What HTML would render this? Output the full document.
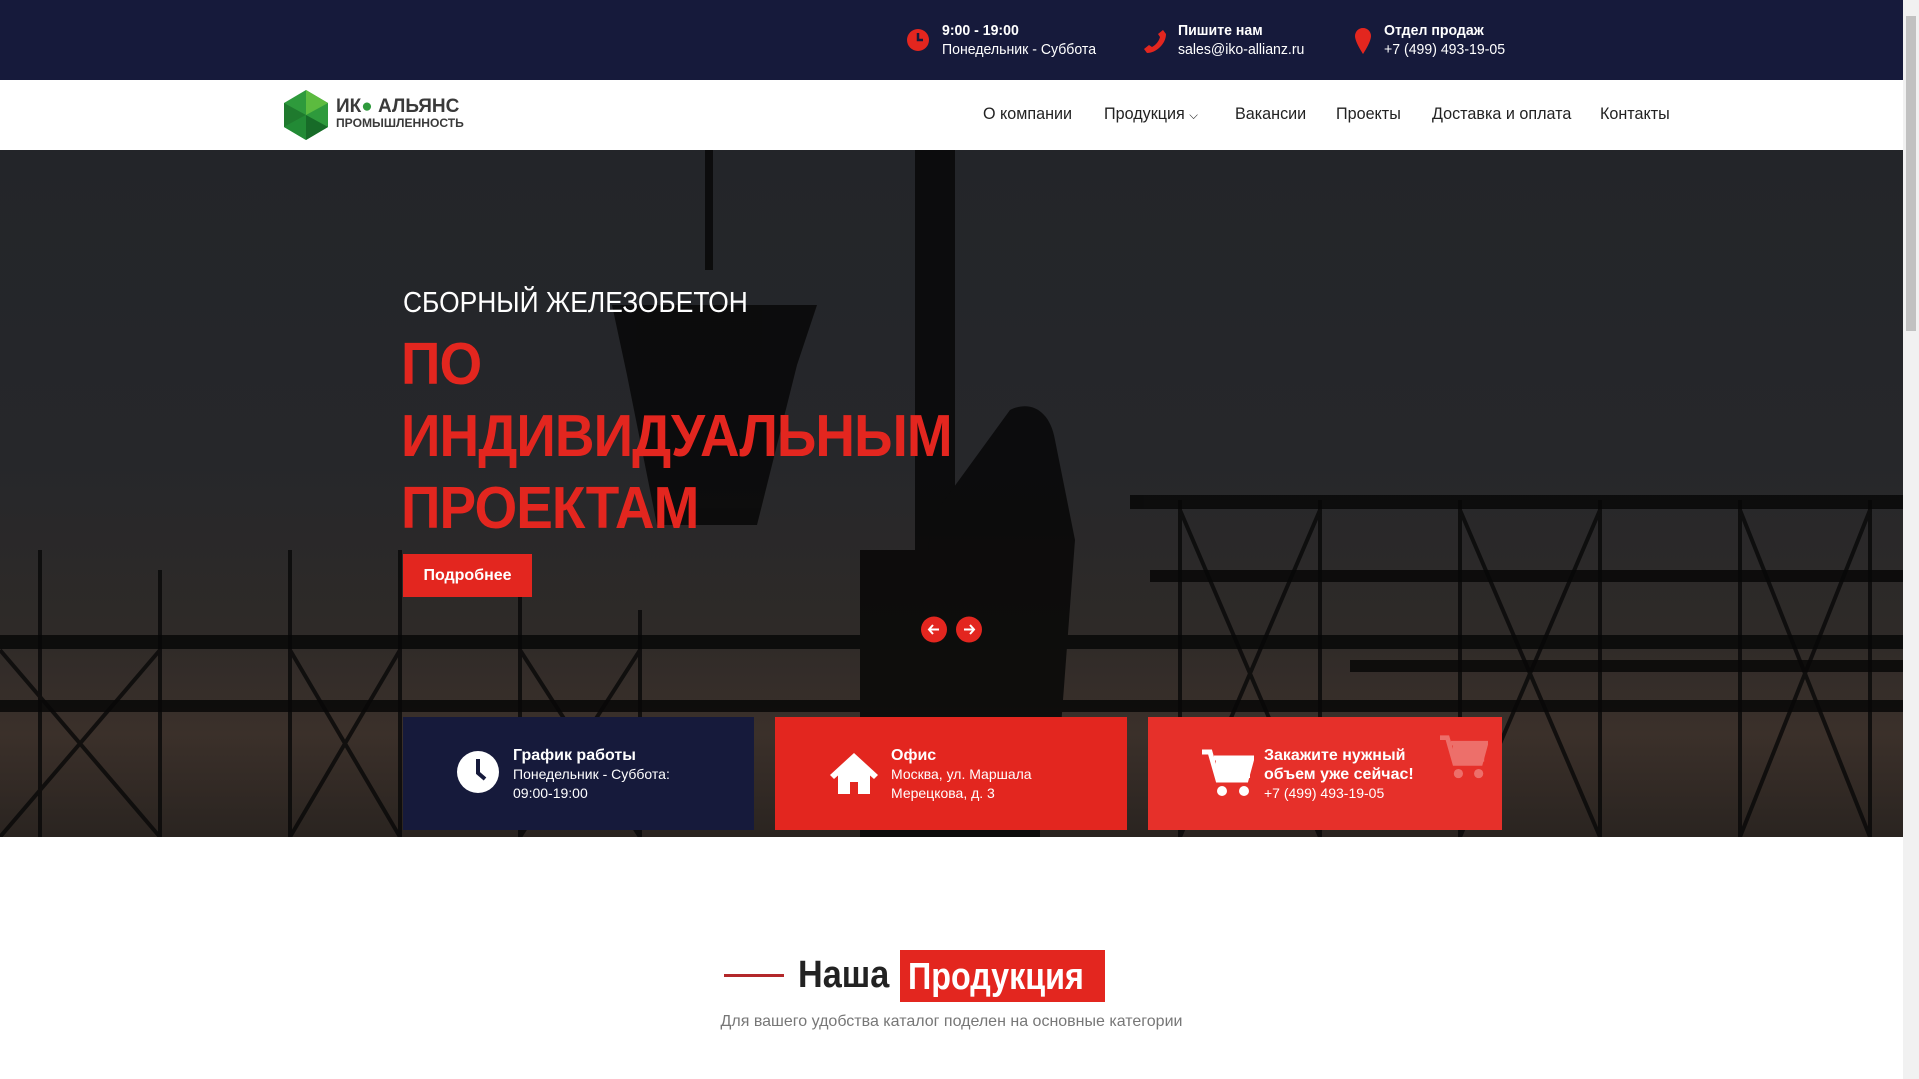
<!DOCTYPE html>
<html><head><meta charset="utf-8"><style>
*{margin:0;padding:0;box-sizing:border-box}
body{width:1919px;height:1079px;overflow:hidden;background:#fff;font-family:"Liberation Sans Narrow","Liberation Sans","DejaVu Sans",sans-serif;position:relative}
.a{position:absolute}
.top{left:0;top:0;width:1903px;height:80px;background:#161a3b}
.tb{color:#fff;font-size:15px;line-height:19px;transform:scaleX(.94);transform-origin:left top}
.tb b{display:block}
.nav{left:0;top:80px;width:1903px;height:70px;background:#fff}
.nl{top:104px;font-size:17px;color:#222;transform:scaleX(.95);transform-origin:left top}
.hero{left:0;top:150px;width:1903px;height:687px;background:linear-gradient(180deg,#232529 0%,#26272a 45%,#2e2a28 70%,#3b302a 85%,#2a2420 100%);overflow:hidden}
.card{top:717px;height:113px;color:#fff;font-size:14px;line-height:19px}
.card b{font-size:16px;display:block}
.sb{left:1903px;top:0;width:16px;height:1079px;background:#f1f1f1}
</style></head><body>
<div class="a top"></div>
<div class="a sb"><div class="a" style="left:3px;top:16px;width:10px;height:315px;background:#c1c1c1"></div></div>
<svg class="a" style="left:906px;top:28px" width="24" height="24" viewBox="0 0 24 24"><circle cx="12" cy="12" r="11" fill="#e3261f"/><path d="M12 5v7h5" stroke="#161a3b" stroke-width="2.5" fill="none"/></svg>
<div class="a tb" style="left:942px;top:21px"><b>9:00 - 19:00</b>Понедельник - Суббота</div>
<svg class="a" style="left:1143px;top:28px" width="24" height="26" viewBox="0 0 24 26"><path d="M20 2l3 4c0 10-10 19-19 19L1 21l5-4 3 2c4-2 7-6 8-10l-2-3z" fill="#e3261f"/></svg>
<div class="a tb" style="left:1178px;top:21px"><b>Пишите нам</b>sales@iko-allianz.ru</div>
<svg class="a" style="left:1354px;top:27px" width="18" height="28" viewBox="0 0 18 28"><path d="M9 1C4 1 1 5 1 9c0 6 8 18 8 18s8-12 8-18c0-4-3-8-8-8z" fill="#e3261f"/></svg>
<div class="a tb" style="left:1384px;top:21px"><b>Отдел продаж</b>+7 (499) 493-19-05</div>
<div class="a nav"></div>
<svg class="a" style="left:283px;top:89px" width="46" height="52" viewBox="0 0 46 52"><polygon points="23,1 45,14 45,38 23,51 1,38 1,14" fill="#2e9a3c"/><polygon points="23,1 45,14 23,26" fill="#5cbb3f"/><polygon points="1,14 23,26 1,38" fill="#1f7a2e"/><polygon points="23,26 45,38 23,51" fill="#176b28"/><polygon points="23,26 23,51 1,38" fill="#228a35"/></svg>
<div class="a" style="left:336px;top:97px;font-size:19px;font-weight:bold;color:#3a3a3a;line-height:20px">ИК<span style="color:#2e9a3c">●</span> АЛЬЯНС</div>
<div class="a" style="left:336px;top:118px;font-size:11.5px;font-weight:bold;color:#3a3a3a;transform:scaleX(1.05);transform-origin:left top">ПРОМЫШЛЕННОСТЬ</div>
<div class="a nl" style="left:983px">О компании</div>
<div class="a nl" style="left:1104px">Продукция <span style="font-size:12px">&#9013;</span></div>
<div class="a nl" style="left:1235px">Вакансии</div>
<div class="a nl" style="left:1336px">Проекты</div>
<div class="a nl" style="left:1432px">Доставка и оплата</div>
<div class="a nl" style="left:1600px">Контакты</div>
<div class="a hero">
<svg width="1903" height="687" style="position:absolute;left:0;top:0" viewBox="0 0 1903 687">
<g fill="#080808" opacity=".85">
<rect x="705" y="0" width="8" height="120"/>
<path d="M612 155h205l-20 60-40 160h-100l-30-150z"/>
<rect x="915" y="0" width="40" height="687"/>
<path d="M1010 260c20-10 40 0 45 30l20 100-15 200h-140l10-220z"/>
<rect x="860" y="400" width="180" height="287"/>
<rect x="0" y="485" width="1903" height="14"/>
<rect x="1130" y="345" width="773" height="14"/>
<rect x="1150" y="420" width="753" height="12"/>
<rect x="0" y="550" width="1903" height="12"/>
<rect x="1350" y="510" width="553" height="12"/>
</g>
<g stroke="#080808" stroke-width="4" opacity=".8">
<path d="M40 400v287M160 420v267M290 400v287M400 400v287M520 440v247M640 460v247M1180 350v337M1320 350v337M1460 350v337M1600 350v337M1740 350v337M1870 350v337"/>
<path d="M0 500l160 187M160 500l-160 187M290 500l110 187M400 500l-110 187M1180 360l140 327M1320 360l-140 327M1460 360l140 327M1600 360l-140 327M1740 360l130 327M1870 360l-130 327M520 500l120 187M640 500l-120 187"/>
</g>
</svg>
</div>
<div class="a" style="left:403px;top:287px;font-size:29px;color:#fff;font-family:'Liberation Sans',sans-serif;transform:scaleX(.91);transform-origin:left top">СБОРНЫЙ ЖЕЛЕЗОБЕТОН</div>
<div class="a" style="left:401px;top:328px;font-size:59px;line-height:72px;color:#e3261f;font-weight:bold;font-family:'Liberation Sans',sans-serif;letter-spacing:-1px;transform:scaleX(.93);transform-origin:left top">ПО<br>ИНДИВИДУАЛЬНЫМ<br>ПРОЕКТАМ</div>
<div class="a" style="left:403px;top:554px;width:129px;height:43px;background:#e3261f;color:#fff;font-weight:bold;font-size:16px;line-height:43px;text-align:center">Подробнее</div>
<svg class="a" style="left:921px;top:616px" width="62" height="27"><circle cx="13" cy="13.5" r="13" fill="#e3261f"/><circle cx="48" cy="13.5" r="13" fill="#e3261f"/><path d="M18 13.5H8M12 9l-4 4.5 4 4.5M43 13.5h10M49 9l4 4.5-4 4.5" stroke="#fff" stroke-width="2" fill="none"/></svg>
<div class="a card" style="left:403px;width:351px;background:#161a3b"></div>
<svg class="a" style="left:456px;top:750px" width="44" height="44"><circle cx="22" cy="22" r="21" fill="#fff"/><path d="M22 9v14l7 6" stroke="#161a3b" stroke-width="4" fill="none"/></svg>
<div class="a card" style="left:513px;top:746px;height:auto"><b>График работы</b>Понедельник - Суббота:<br>09:00-19:00</div>
<div class="a card" style="left:775px;width:352px;background:#e3261f"></div>
<svg class="a" style="left:829px;top:751px" width="50" height="44" viewBox="0 0 50 44"><path d="M25 2L1 24l4 4 4-3.5V43h12V31h8v12h12V24.5l4 3.5 4-4z" fill="#fff"/></svg>
<div class="a card" style="left:891px;top:746px;height:auto"><b>Офис</b>Москва, ул. Маршала<br>Мерецкова, д. 3</div>
<div class="a card" style="left:1148px;width:354px;background:#e6302a"></div>
<svg class="a" style="left:1200px;top:748px" width="54" height="50" viewBox="0 0 54 50"><path d="M2 4h8l8 28h28l6-22H14" stroke="#fff" stroke-width="5" fill="none"/><rect x="16" y="12" width="34" height="18" fill="#fff"/><circle cx="22" cy="43" r="5" fill="#fff"/><circle cx="44" cy="43" r="5" fill="#fff"/></svg>
<svg class="a" style="left:1438px;top:734px" width="50" height="46" viewBox="0 0 54 50" opacity=".3"><path d="M2 4h8l8 28h28l6-22H14" stroke="#fff" stroke-width="5" fill="none"/><rect x="16" y="12" width="34" height="18" fill="#fff"/><circle cx="22" cy="43" r="5" fill="#fff"/><circle cx="44" cy="43" r="5" fill="#fff"/></svg>
<div class="a card" style="left:1264px;top:746px;height:auto"><b>Закажите нужный<br>объем уже сейчас!</b>+7 (499) 493-19-05</div>
<div class="a" style="left:724px;top:974px;width:60px;height:3px;background:#b3282a"></div>
<div class="a" style="left:798px;top:950px;font-size:38px;font-weight:bold;color:#222;line-height:50px;transform:scaleX(.9);transform-origin:left top">Наша</div>
<div class="a" style="left:900px;top:950px;width:205px;height:52px;background:#e3261f"></div>
<div class="a" style="left:908px;top:950px;color:#fff;font-size:38px;font-weight:bold;line-height:54px;font-family:'Liberation Sans',sans-serif;transform:scaleX(.85);transform-origin:left top;white-space:nowrap">Продукция</div>
<div class="a" style="left:0;width:1903px;top:1013px;text-align:center;font-size:16px;color:#777">Для вашего удобства каталог поделен на основные категории</div>
</body></html>
